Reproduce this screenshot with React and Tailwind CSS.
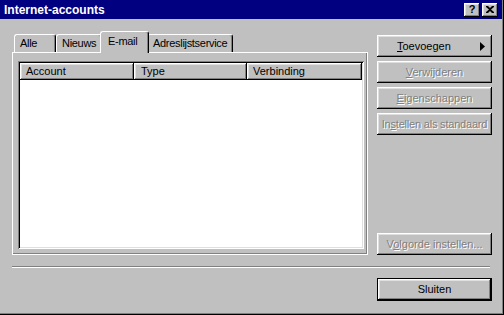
import React from "react";

const raised =
  "shadow-[inset_-1px_-1px_#000,inset_1px_1px_#fff,inset_-2px_-2px_#808080,inset_2px_2px_#dfdfdf]";

function Btn({ children, disabled, className = "" }) {
  return (
    <div
      className={`h-[22px] w-[115px] bg-[#c0c0c0] flex items-center justify-center ${raised} ${
        disabled ? "text-[#808080] [text-shadow:1px_1px_0_#fff]" : "text-black"
      } ${className}`}
    >
      {children}
    </div>
  );
}

function Tab({ label, w, selected }) {
  return (
    <div
      className={`relative bg-[#c0c0c0] border-l border-t border-white border-r border-r-black rounded-tl-[3px] rounded-tr-[3px] shadow-[inset_-1px_0_#808080] flex items-center pl-[5px] tracking-[-0.3px] whitespace-nowrap ${
        selected ? "h-[22px] -mx-[2px] mb-[-1px] z-10 pb-[2px] pl-[7px]" : "h-[18px]"
      }`}
      style={{ width: w }}
    >
      {label}
    </div>
  );
}

export default function App() {
  return (
    <div className="w-[504px] h-[315px] bg-[#c0c0c0] flex flex-col font-['Liberation_Sans',Arial,sans-serif] text-[11px] text-black shadow-[inset_-1px_-1px_#000,inset_-2px_-2px_#808080] overflow-hidden leading-none">
      {/* title bar */}
      <div className="h-[19px] mr-[2px] bg-[#000080] flex items-center justify-between pl-[4px] pr-[4px]">
        <span className="text-white font-bold text-[12px]">Internet-accounts</span>
        <div className="flex items-center gap-[2px]">
          <div className={`w-[16px] h-[14px] bg-[#c0c0c0] ${raised} flex items-center justify-center font-bold text-[11px] pb-[1px]`}>
            ?
          </div>
          <div className={`w-[16px] h-[14px] bg-[#c0c0c0] ${raised} flex items-center justify-center`}>
            <svg width="8" height="7" viewBox="0 0 8 7">
              <path d="M0 0h2l2 2 2-2h2v1L5 3.5 8 6v1H6L4 5 2 7H0V6l3-2.5L0 1z" fill="#000" />
            </svg>
          </div>
        </div>
      </div>

      {/* body */}
      <div className="flex flex-col pl-[12px] pt-[12px]">
        <div className="flex">
          {/* left: tabs + panel */}
          <div className="flex flex-col w-[356px]">
            <div className="h-[21px] flex items-end pl-[2px]">
              <Tab label="Alle" w={42} />
              <Tab label="Nieuws" w={46} />
              <Tab label="E-mail" w={49} selected />
              <Tab label="Adreslijstservice" w={86} />
            </div>
            <div className="h-[203px] bg-[#c0c0c0] border-l border-t border-white border-r border-b border-black shadow-[inset_-1px_-1px_#808080] pl-[5px] pt-[8px]">
              <div className="w-[346px] h-[188px] bg-white shadow-[inset_1px_1px_#808080,inset_-1px_-1px_#fff,inset_2px_2px_#000,inset_-2px_-2px_#dfdfdf] pl-[2px] pt-[2px]">
                <div className="flex h-[17px]">
                  <div className={`w-[114px] h-full bg-[#c0c0c0] ${raised} flex items-center pl-[6px]`}>Account</div>
                  <div className={`w-[113px] h-full bg-[#c0c0c0] ${raised} flex items-center pl-[7px]`}>Type</div>
                  <div className={`w-[115px] h-full bg-[#c0c0c0] ${raised} flex items-center pl-[6px]`}>Verbinding</div>
                </div>
              </div>
            </div>
          </div>

          {/* right: buttons */}
          <div className="ml-[9px] flex flex-col h-[224px] pt-[4px] gap-[4px]">
            <div className={`h-[22px] w-[115px] bg-[#c0c0c0] ${raised} flex items-center justify-between pl-[20px] pr-[7px]`}>
              <span>
                <span className="underline">T</span>oevoegen
              </span>
              <svg width="5" height="9" viewBox="0 0 5 9">
                <path d="M0 0L5 4.5L0 9z" fill="#000" />
              </svg>
            </div>
            <Btn disabled>
              <span>
                <span className="underline">V</span>erwijderen
              </span>
            </Btn>
            <Btn disabled>
              <span>
                <span className="underline">E</span>igenschappen
              </span>
            </Btn>
            <Btn disabled>
              <span className="tracking-[-0.2px]">
                In<span className="underline">s</span>tellen als standaard
              </span>
            </Btn>
            <Btn disabled className="mt-auto">
              <span>
                V<span className="underline">o</span>lgorde instellen...
              </span>
            </Btn>
          </div>
        </div>

        {/* separator */}
        <div className="mt-[11px] w-[478px] h-[2px] border-t border-[#808080] border-b border-b-white" />

        {/* Sluiten */}
        <div className="mt-[10px] flex pl-[365px]">
          <div className="w-[115px] h-[23px] border border-black">
            <div className={`w-full h-full bg-[#c0c0c0] ${raised} flex items-center justify-center`}>Sluiten</div>
          </div>
        </div>
      </div>
    </div>
  );
}
